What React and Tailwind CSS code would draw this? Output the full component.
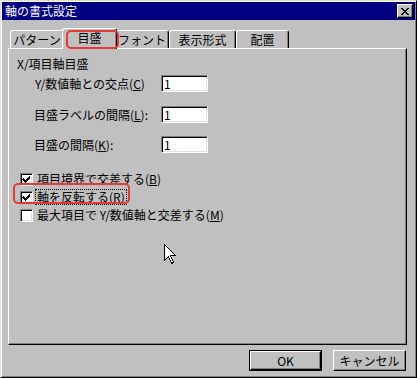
import React from 'react';

const raised =
  'border border-t-white border-l-white border-r-black border-b-black shadow-[inset_-1px_-1px_0_#808080]';
const sunken =
  'border border-t-[#808080] border-l-[#808080] border-r-white border-b-white shadow-[inset_1px_1px_0_#000,inset_-1px_-1px_0_#dfdfdf]';

const Key = ({ k }) => <span className="underline underline-offset-[1px]">{k}</span>;

const Tab = ({ label, width, active }) => (
  <div
    className={
      active
        ? 'relative z-10 -mx-[2px] h-[21px] self-start bg-[#c0c0c0] border-t border-l border-white border-r border-r-black rounded-t-[3px] shadow-[inset_-1px_0_0_#808080] flex items-center justify-center pb-[2px]'
        : 'h-[18px] mt-[2px] bg-[#c0c0c0] border-t border-l border-white border-r border-r-black rounded-t-[3px] shadow-[inset_-1px_0_0_#808080] flex items-center justify-center'
    }
    style={{ width }}
  >
    {label}
  </div>
);

const Field = ({ children, top }) => (
  <div className={`flex items-center h-[17px] ${top}`}>
    <div className="w-[126px] ml-[18px] whitespace-nowrap">{children}</div>
    <div className={`w-[47px] h-[17px] bg-white ${sunken} flex items-center pl-[2px] leading-none`}>1</div>
  </div>
);

const Check = ({ checked, focused, children }) => (
  <div className="flex items-center h-[18px]">
    <div className={`ml-[3px] w-[13px] h-[13px] bg-white ${sunken} flex items-center justify-center`}>
      {checked && (
        <svg width="9" height="9" viewBox="0 0 9 9" shapeRendering="crispEdges">
          <path d="M1 3h1v1h1v1h1v-1h1v-1h1v-1h1v-1h1v3h-1v1h-1v1h-1v1h-1v1h-1v-1h-1v-1h-1v-1h-1z" fill="#000" />
        </svg>
      )}
    </div>
    <div
      className={`ml-[2px] px-[1px] leading-[14px] whitespace-nowrap border ${
        focused ? 'border-dotted border-black' : 'border-transparent'
      }`}
    >
      {children}
    </div>
  </div>
);

export default function App() {
  return (
    <div className="relative w-[417px] h-[378px] bg-[#c0c0c0] text-black text-[12px] font-['Noto_Sans_CJK_JP',sans-serif] border border-t-[#dfdfdf] border-l-[#dfdfdf] border-r-black border-b-black shadow-[inset_1px_1px_0_#fff,inset_-1px_-1px_0_#808080] p-[1px] flex flex-col">
      {/* title bar */}
      <div className="h-[18px] bg-[#000080] flex items-center justify-between pl-[3px] pr-[2px]">
        <span className="text-white leading-none">軸の書式設定</span>
        <div className={`w-[16px] h-[14px] bg-[#c0c0c0] ${raised} flex items-center justify-center`}>
          <svg width="8" height="7" viewBox="0 0 8 7" shapeRendering="crispEdges">
            <path d="M0 0h2v1h1v1h2v-1h1v-1h2v1h-1v1h-1v1h-1v1h1v1h1v1h1v1h-2v-1h-1v-1h-2v1h-1v1h-2v-1h1v-1h1v-1h1v-1h-1v-1h-1v-1h-1z" fill="#000" />
          </svg>
        </div>
      </div>

      {/* tabs */}
      <div className="mt-[8px] ml-[8px] h-[20px] flex items-start">
        <Tab label="パターン" width={54} />
        <Tab label="目盛" width={55} active />
        <Tab label="フォント" width={54} />
        <Tab label="表示形式" width={67} />
        <Tab label="配置" width={53} />
      </div>

      {/* panel */}
      <div className="ml-[6px] mr-[8px] h-[297px] border border-t-white border-l-white border-r-black border-b-black shadow-[inset_-1px_-1px_0_#808080] pt-[8px] pl-[8px] flex flex-col">
        <div className="h-[14px] leading-[14px]">X/項目軸目盛</div>
        <Field top="mt-[4px]">
          Y/数値軸との交点(<Key k="C" />)
        </Field>
        <Field top="mt-[14px]">
          <span className="-ml-[1px]">目盛ラベルの間隔(<Key k="L" />):</span>
        </Field>
        <Field top="mt-[13px]">
          <span className="-ml-[1px]">目盛の間隔(<Key k="K" />):</span>
        </Field>
        <div className="mt-[17px] flex flex-col">
          <Check checked>
            項目境界で交差する(<Key k="B" />)
          </Check>
          <Check checked focused>
            軸を反転する(<Key k="R" />)
          </Check>
          <Check>
            最大項目で Y/数値軸と交差する(<Key k="M" />)
          </Check>
        </div>
      </div>

      {/* buttons */}
      <div className="mt-[5px] flex justify-end gap-[11px] pr-[9px]">
        <div className="w-[73px] h-[21px] border border-black">
          <div className={`w-full h-full ${raised} flex items-center justify-center`}>OK</div>
        </div>
        <div className={`w-[73px] h-[21px] ${raised} flex items-center justify-center`}>キャンセル</div>
      </div>

      {/* annotations */}
      <div className="absolute left-[65px] top-[29px] w-[53px] h-[19px] border-2 border-[#e53935] rounded-[5px] z-20" />
      <div className="absolute left-[12px] top-[182px] w-[117px] h-[21px] border-2 border-[#e53935] rounded-[5px] z-20" />

      {/* mouse pointer */}
      <svg className="absolute left-[163px] top-[243px]" width="13" height="21" viewBox="0 0 13 21" shapeRendering="crispEdges">
        <path d="M0.5 0.5V16.5L4.5 12.5L7.5 19.5L9.5 18.5L6.5 11.5H11.5Z" fill="#fff" stroke="#000" strokeWidth="1" />
      </svg>
    </div>
  );
}
